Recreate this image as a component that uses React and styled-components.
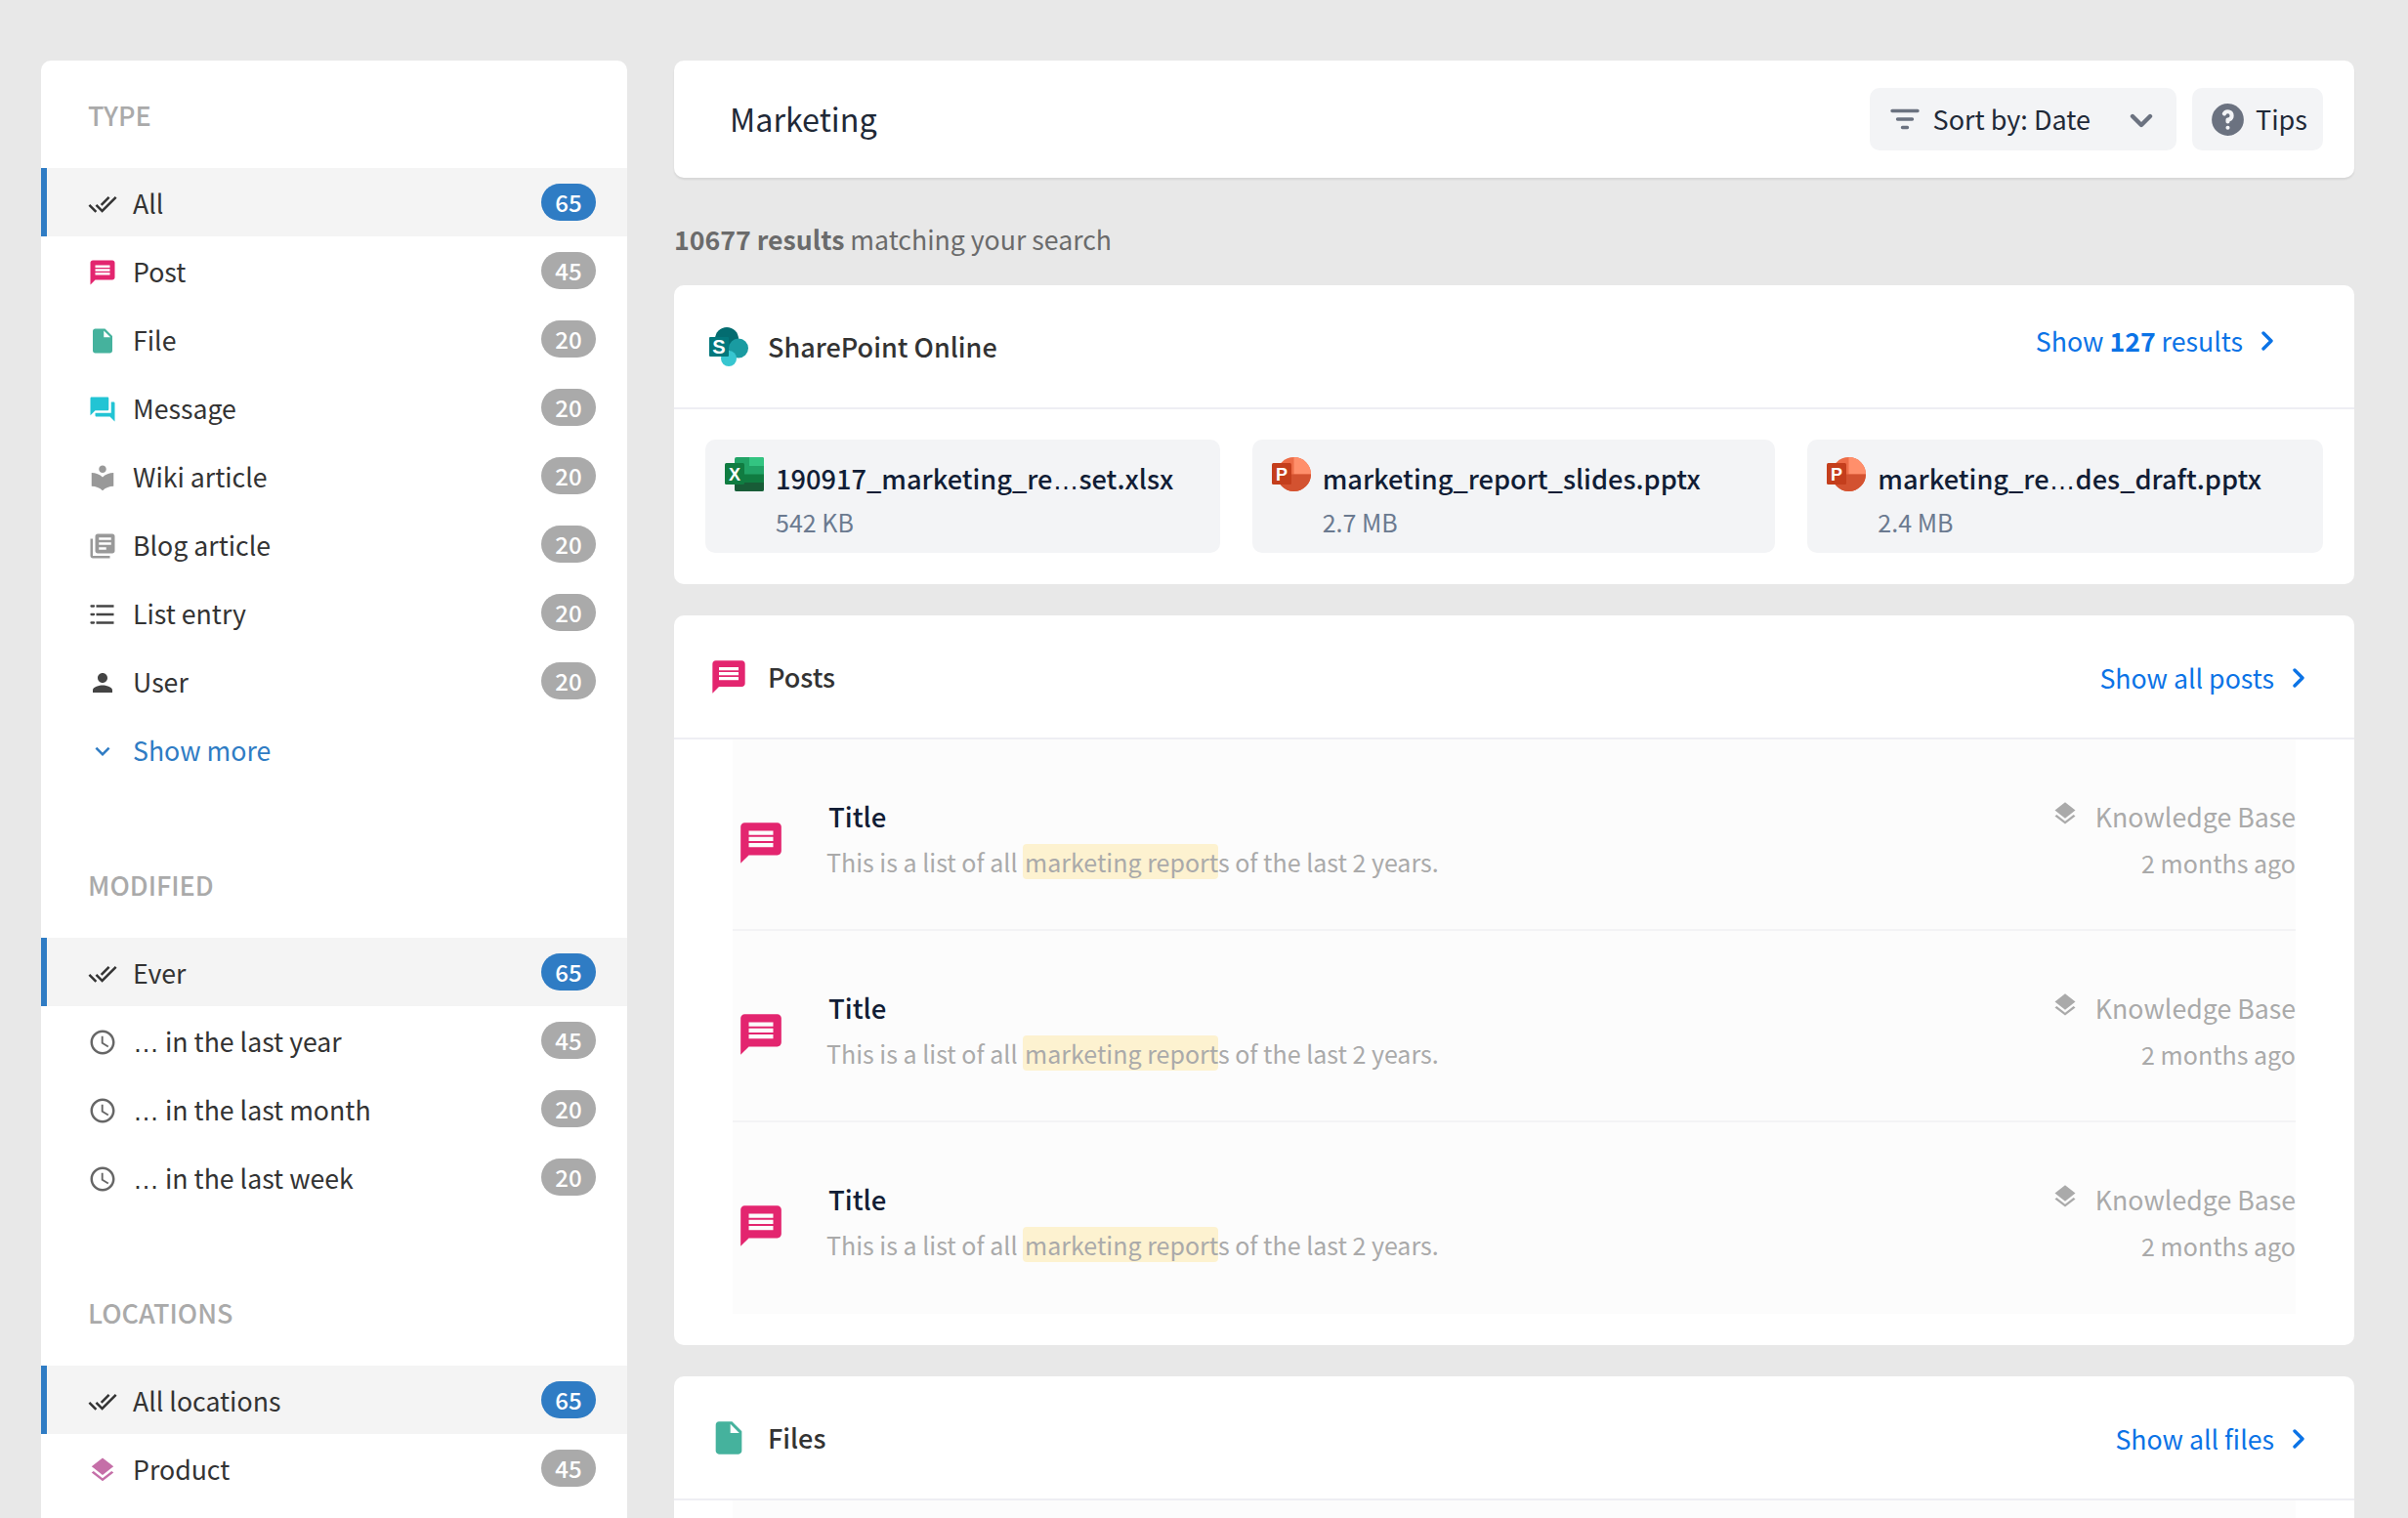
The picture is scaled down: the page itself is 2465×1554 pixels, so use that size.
import React from "react";
import styled, { createGlobalStyle } from "styled-components";
import {
  MdDoneAll,
  MdMessage,
  MdInsertDriveFile,
  MdQuestionAnswer,
  MdLocalLibrary,
  MdLibraryBooks,
  MdPerson,
  MdExpandMore,
  MdAccessTime,
  MdLayers,
} from "react-icons/md";

const GlobalStyle = createGlobalStyle`
  html, body {
    margin: 0;
    height: 100%;
    background: #e8e8e8;
  }
  body {
    font-family: "Noto Sans CJK SC", "Noto Sans", sans-serif;
    font-size: 26.7px;
    color: #333;
  }
`;

const Page = styled.div`
  display: flex;
  align-items: flex-start;
  gap: 48px;
  height: 100vh;
  box-sizing: border-box;
  padding: 62px 55px 0 42px;
  overflow: hidden;
`;

const Sidebar = styled.aside`
  flex: 0 0 600px;
  background: #fff;
  border-radius: 10px;
  padding: 36px 0 100px;
`;

const Group = styled.section`
  & + & {
    margin-top: 84px;
  }
`;

const GroupLabel = styled.h3`
  margin: 0 0 34px;
  padding-left: 48px;
  height: 40px;
  font-size: 27px;
  line-height: 39px;
  font-weight: 500;
  color: #aaa;
`;

const Row = styled.div`
  display: flex;
  align-items: center;
  height: 70px;
  box-sizing: border-box;
  padding: 0 32px 0 42px;
  border-left: 6px solid ${(p) => (p.$active ? "#2f7cc4" : "transparent")};
  background: ${(p) => (p.$active ? "#f4f4f4" : "transparent")};
`;

const RowIcon = styled.span`
  flex: 0 0 30px;
  display: flex;
  justify-content: center;
  margin-right: 16px;
  padding-top: 3px;
  font-size: 30px;
  color: ${(p) => p.$color};
`;

const RowText = styled.span`
  flex: 1;
  font-size: 26.7px;
  line-height: 39px;
  color: ${(p) => p.$color || "#333"};
`;

const Dots = styled.span`
  font-family: "Liberation Sans", sans-serif;
  font-size: ${(p) => p.$size}px;
  line-height: 0;
`;

const Pill = styled.span`
  width: 56px;
  height: 38px;
  border-radius: 19px;
  display: flex;
  align-items: center;
  justify-content: center;
  font-size: 24px;
  line-height: 38px;
  font-weight: 500;
  color: #fff;
  background: ${(p) => (p.$active ? "#2f7cc4" : "#aaa")};
`;

const Main = styled.main`
  flex: 1;
  min-width: 0;
`;

const TopBar = styled.header`
  display: flex;
  align-items: center;
  height: 120px;
  box-sizing: border-box;
  padding: 0 32px 0 57px;
  gap: 16px;
  background: #fff;
  border-radius: 10px;
  box-shadow: 0 2px 2px rgba(0, 0, 0, 0.08);
`;

const PageTitle = styled.h1`
  flex: 1;
  margin: 0;
  padding-bottom: 3px;
  font-size: 32.3px;
  line-height: 46px;
  font-weight: 400;
  color: #1f2937;
`;

const ToolButton = styled.button`
  display: flex;
  align-items: center;
  height: 64px;
  box-sizing: border-box;
  padding: 0 ${(p) => p.$right}px 0 ${(p) => p.$left}px;
  gap: ${(p) => p.$gap}px;
  border: 0;
  border-radius: 10px;
  background: #f3f4f6;
  font: inherit;
  font-size: 27px;
  line-height: 38px;
  color: #1f2937;
`;

const SortLabel = styled.span`
  margin-right: 26px;
`;

const ResultCount = styled.p`
  margin: 40px 0 24px;
  font-size: 26.7px;
  line-height: 46px;
  color: #6b6b6b;

  strong {
    font-weight: 600;
  }
`;

const Card = styled.section`
  background: #fff;
  border-radius: 10px;
  margin-bottom: 32px;
`;

const CardHeader = styled.div`
  display: flex;
  align-items: center;
  height: 127px;
  box-sizing: border-box;
  padding: 0 50px 0 32px;
  border-bottom: 2px solid #eeeef3;
`;

const HeaderIcon = styled.span`
  flex: 0 0 47px;
  display: flex;
  justify-content: center;
  margin-right: 17px;
  font-size: 40px;
  color: ${(p) => p.$color};
`;

const CardTitle = styled.h2`
  flex: 1;
  margin: 0;
  font-size: 27px;
  line-height: 39px;
  font-weight: 500;
  color: #333;
`;

const ShowLink = styled.a`
  display: flex;
  align-items: center;
  gap: 18px;
  margin: ${(p) => (p.$raised ? "0 32px 12px 0" : "2px 0 0")};
  font-size: 26.7px;
  line-height: 39px;
  color: #0b73e6;

  strong {
    font-weight: 600;
  }
`;

const FileGrid = styled.div`
  display: grid;
  grid-template-columns: 527fr 536fr 528fr;
  gap: 33px;
  padding: 31px 32px 32px;
`;

const FileTile = styled.div`
  display: grid;
  grid-template-columns: 40px 1fr;
  grid-template-rows: 44px 44px;
  column-gap: 12px;
  height: 116px;
  box-sizing: border-box;
  padding: 18px 20px 0;
  background: #f3f4f6;
  border-radius: 10px;
`;

const FileName = styled.div`
  font-size: 27.2px;
  line-height: 42px;
  font-weight: 500;
  color: #111d35;
  white-space: nowrap;
`;

const FileSize = styled.div`
  grid-column: 2;
  font-size: 25px;
  line-height: 44px;
  color: #6b7a90;
`;

const ResultList = styled.div`
  margin: 0 60px;
  padding-bottom: 32px;
`;

const ResultRow = styled.article`
  display: flex;
  box-sizing: border-box;
  height: 196px;
  padding: 57px 0 0 4px;
  background: #fcfcfc;
  border-bottom: 2px solid #f3f3f5;

  &:last-child {
    border-bottom: 0;
  }
`;

const ResultIcon = styled.span`
  flex: 0 0 50px;
  margin-top: 24px;
  margin-right: 42px;
  height: 50px;
  font-size: 50px;
  line-height: 0;
  color: #e3256f;
`;

const ResultBody = styled.div`
  flex: 1;
`;

const ResultTitle = styled.div`
  padding-left: 2px;
  margin-bottom: 3px;
  font-size: 27.5px;
  line-height: 42px;
  font-weight: 500;
  color: #111d35;
`;

const Snippet = styled.div`
  font-size: 25px;
  line-height: 46px;
  color: #aaa;

  mark {
    background: #fdf2d0;
    color: inherit;
    border-radius: 4px;
    padding-left: 2px;
  }
`;

const ResultMeta = styled.div`
  text-align: right;
  font-size: 25px;
  line-height: 46px;
  color: #aaa;
`;

const Source = styled.div`
  display: flex;
  align-items: center;
  justify-content: flex-end;
  gap: 17px;
  margin-bottom: 3px;
  font-size: 26.7px;
  line-height: 43px;

  svg {
    font-size: 28px;
    margin-top: -6px;
  }
`;

const ChevronDownSvg = styled.svg`
  margin-top: 3px;
`;

const Chevron = () => (
  <svg width="14" height="20" viewBox="0 0 14 20" fill="none">
    <path d="M3 2l8 8-8 8" stroke="currentColor" strokeWidth="3.4" strokeLinecap="round" strokeLinejoin="round" />
  </svg>
);

const FilterIcon = () => (
  <svg width="30" height="22" viewBox="0 0 30 22" fill="none" stroke="#6b7280" strokeWidth="3.4" strokeLinecap="round">
    <path d="M2 2.5h26M7.5 11h15M12.5 19.5h5" />
  </svg>
);

const DownIcon = () => (
  <ChevronDownSvg width="24" height="16" viewBox="0 0 24 16" fill="none">
    <path d="M3 3l9 9 9-9" stroke="#6b7280" strokeWidth="4.4" strokeLinecap="round" strokeLinejoin="round" />
  </ChevronDownSvg>
);

const HelpIcon = () => (
  <svg width="41" height="41" viewBox="0 0 20 20" fill="#6b7280">
    <path
      fillRule="evenodd"
      clipRule="evenodd"
      d="M18 10a8 8 0 11-16 0 8 8 0 0116 0zm-8-3a1 1 0 00-.867.5 1 1 0 11-1.731-1A3 3 0 0113 8a3.001 3.001 0 01-2 2.83V11a1 1 0 11-2 0v-1a1 1 0 011-1 1 1 0 100-2zm0 8a1 1 0 100-2 1 1 0 000 2z"
    />
  </svg>
);

// thinner and taller than the material list glyph
const ListIcon = () => (
  <svg width="1em" height="1em" viewBox="0 0 30 30" fill="none" stroke="currentColor" strokeWidth="2.3">
    <path d="M8.5 6.5H26.5M8.5 15H26.5M8.5 23.5H26.5" />
    <path d="M3.5 6.5h2.5M3.5 15h2.5M3.5 23.5h2.5" strokeLinecap="round" />
  </svg>
);

const LogoLetter = styled.text`
  font-family: "Liberation Sans", sans-serif;
  font-weight: 700;
  font-size: ${(p) => p.$size}px;
  fill: #fff;
  text-anchor: middle;
`;

const SharePointLogo = () => (
  <svg width="40" height="40" viewBox="0 0 40 40">
    <circle cx="18" cy="12" r="12" fill="#036c70" />
    <circle cx="30" cy="21.5" r="10" fill="#1a9ba1" />
    <circle cx="20" cy="32" r="8" fill="#37c6d0" />
    <rect x="0" y="10" width="20" height="20" rx="1" fill="#03787c" />
    <LogoLetter x="10" y="27" $size={20}>S</LogoLetter>
  </svg>
);

const ExcelLogo = () => (
  <svg width="40" height="35" viewBox="0 0 40 35">
    <rect x="10" y="0" width="30" height="35" rx="2" fill="#21a366" />
    <path d="M25 0h13a2 2 0 012 2v7H25z" fill="#33c481" />
    <rect x="10" y="17.5" width="30" height="9" fill="#107c41" />
    <path d="M10 26h30v7a2 2 0 01-2 2H12a2 2 0 01-2-2z" fill="#185c37" />
    <rect x="0" y="6" width="20" height="22" rx="1.5" fill="#107c41" />
    <LogoLetter x="10" y="23.5" $size={18}>X</LogoLetter>
  </svg>
);

const PowerPointLogo = () => (
  <svg width="40" height="35" viewBox="0 0 40 35">
    <circle cx="22.5" cy="17.5" r="17.5" fill="#ed6c47" />
    <path d="M22.5 0a17.5 17.5 0 0117.5 17.5H22.5z" fill="#ff8f6b" />
    <path d="M5 17.5h35a17.5 17.5 0 01-35 0z" fill="#d35230" />
    <rect x="0" y="6" width="20" height="22" rx="1.5" fill="#c43e1c" />
    <LogoLetter x="10" y="23.5" $size={18}>P</LogoLetter>
  </svg>
);

const ALL_ICON = <MdDoneAll />;
const CLOCK_ICON = <MdAccessTime />;

const typeRows = [
  { icon: ALL_ICON, color: "#333", label: "All", count: 65, active: true },
  { icon: <MdMessage />, color: "#e3256f", label: "Post", count: 45 },
  { icon: <MdInsertDriveFile />, color: "#45b29d", label: "File", count: 20 },
  { icon: <MdQuestionAnswer />, color: "#22c4d4", label: "Message", count: 20 },
  { icon: <MdLocalLibrary />, color: "#999", label: "Wiki article", count: 20 },
  { icon: <MdLibraryBooks />, color: "#999", label: "Blog article", count: 20 },
  { icon: <ListIcon />, color: "#444", label: "List entry", count: 20 },
  { icon: <MdPerson />, color: "#444", label: "User", count: 20 },
];

const modifiedRows = [
  { icon: ALL_ICON, color: "#333", label: "Ever", count: 65, active: true },
  { icon: CLOCK_ICON, color: "#666", label: "in the last year", dots: true, count: 45 },
  { icon: CLOCK_ICON, color: "#666", label: "in the last month", dots: true, count: 20 },
  { icon: CLOCK_ICON, color: "#666", label: "in the last week", dots: true, count: 20 },
];

const locationRows = [
  { icon: ALL_ICON, color: "#333", label: "All locations", count: 65, active: true },
  { icon: <MdLayers />, color: "#c56fa8", label: "Product", count: 45 },
];

const files = [
  { logo: <ExcelLogo />, name: ["190917_marketing_re", "set.xlsx"], size: "542 KB" },
  { logo: <PowerPointLogo />, name: ["marketing_report_slides.pptx"], size: "2.7 MB" },
  { logo: <PowerPointLogo />, name: ["marketing_re", "des_draft.pptx"], size: "2.4 MB" },
];

const FilterRow = ({ row }) => (
  <Row $active={row.active}>
    <RowIcon $color={row.color}>{row.icon}</RowIcon>
    <RowText>
      {row.dots && <Dots $size={27}>…</Dots>}
      {row.dots && " "}
      {row.label}
    </RowText>
    <Pill $active={row.active}>{row.count}</Pill>
  </Row>
);

const Post = () => (
  <ResultRow>
    <ResultIcon>
      <MdMessage />
    </ResultIcon>
    <ResultBody>
      <ResultTitle>Title</ResultTitle>
      <Snippet>
        This is a list of all <mark>marketing report</mark>s of the last 2 years.
      </Snippet>
    </ResultBody>
    <ResultMeta>
      <Source>
        <MdLayers />
        Knowledge Base
      </Source>
      2 months ago
    </ResultMeta>
  </ResultRow>
);

export default function App() {
  return (
    <Page>
      <GlobalStyle />
      <Sidebar>
        <Group>
          <GroupLabel>TYPE</GroupLabel>
          {typeRows.map((row) => (
            <FilterRow key={row.label} row={row} />
          ))}
          <Row>
            <RowIcon $color="#2f7cc4">
              <MdExpandMore />
            </RowIcon>
            <RowText $color="#2f7cc4">Show more</RowText>
          </Row>
        </Group>
        <Group>
          <GroupLabel>MODIFIED</GroupLabel>
          {modifiedRows.map((row) => (
            <FilterRow key={row.label} row={row} />
          ))}
        </Group>
        <Group>
          <GroupLabel>LOCATIONS</GroupLabel>
          {locationRows.map((row) => (
            <FilterRow key={row.label} row={row} />
          ))}
        </Group>
      </Sidebar>

      <Main>
        <TopBar>
          <PageTitle>Marketing</PageTitle>
          <ToolButton $left={21} $right={24} $gap={14}>
            <FilterIcon />
            <SortLabel>Sort by: Date</SortLabel>
            <DownIcon />
          </ToolButton>
          <ToolButton $left={16} $right={16} $gap={8}>
            <HelpIcon />
            Tips
          </ToolButton>
        </TopBar>

        <ResultCount>
          <strong>10677 results</strong> matching your search
        </ResultCount>

        <Card>
          <CardHeader>
            <HeaderIcon>
              <SharePointLogo />
            </HeaderIcon>
            <CardTitle>SharePoint Online</CardTitle>
            <ShowLink $raised>
              <span>
                Show <strong>127</strong> results
              </span>
              <Chevron />
            </ShowLink>
          </CardHeader>
          <FileGrid>
            {files.map((file) => (
              <FileTile key={file.size}>
                {file.logo}
                <FileName>
                  {file.name[0]}
                  {file.name[1] && <Dots $size={27}>…</Dots>}
                  {file.name[1]}
                </FileName>
                <FileSize>{file.size}</FileSize>
              </FileTile>
            ))}
          </FileGrid>
        </Card>

        <Card>
          <CardHeader>
            <HeaderIcon $color="#e3256f">
              <MdMessage />
            </HeaderIcon>
            <CardTitle>Posts</CardTitle>
            <ShowLink>
              Show all posts
              <Chevron />
            </ShowLink>
          </CardHeader>
          <ResultList>
            <Post />
            <Post />
            <Post />
          </ResultList>
        </Card>

        <Card>
          <CardHeader>
            <HeaderIcon $color="#45b29d">
              <MdInsertDriveFile />
            </HeaderIcon>
            <CardTitle>Files</CardTitle>
            <ShowLink>
              Show all files
              <Chevron />
            </ShowLink>
          </CardHeader>
          <ResultList>
            <ResultRow />
          </ResultList>
        </Card>
      </Main>
    </Page>
  );
}
